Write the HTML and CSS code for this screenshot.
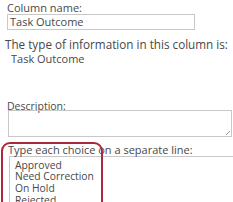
FILE: index.html
```html
<!DOCTYPE html>
<html>
<head>
<link rel="stylesheet" href="styles.css">
</head>
<body>
<div class="form">
  <div class="label">Column name:</div>
  <div class="input">Task Outcome</div>

  <div class="info">The type of information in this column is:</div>
  <div class="value">Task Outcome</div>

  <div class="label desc">Description:</div>
  <div class="textarea"><span class="grip"></span></div>

  <div class="label choice">Type each choice on a separate line:</div>
  <div class="choices">
    <div>Approved</div>
    <div>Need Correction</div>
    <div>On Hold</div>
    <div>Rejected</div>
  </div>
</div>
<!-- red highlight drawn over the choice box -->
<div class="mark"></div>
</body>
</html>
```

FILE: styles.css
```css
body {
  margin: 0;
  background: #fff;
  color: #484848;
  font-family: 'Open Sans', Arial, sans-serif;
  font-size: 11px;
  overflow: hidden;
}

.form {
  padding-top: 2px;
}

.label {
  line-height: 12px;
  padding-left: 7px;
  white-space: nowrap;
}

.input {
  margin: 0 0 0 7px;
  width: 184px;
  height: 14px;
  border: 1px solid #c8c8c8;
  padding-left: 2px;
  line-height: 14px;
}

.info {
  margin-top: 7px;
  padding-left: 5px;
  font-size: 11.7px;
  line-height: 14px;
  white-space: nowrap;
}

.value {
  margin-top: 1px;
  padding-left: 11px;
  line-height: 14px;
}

.desc {
  margin-top: 34px;
  font-size: 10.5px;
}

.textarea {
  position: relative;
  margin: -2px 0 0 8px;
  width: 222px;
  height: 25px;
  border: 1px solid #c8c8c8;
}

.grip {
  position: absolute;
  right: 1px;
  bottom: 1px;
  width: 4px;
  height: 4px;
  background: linear-gradient(135deg, transparent 45%, #999 45%, #999 60%, transparent 60%);
}

.choice {
  margin-top: 7px;
  padding-left: 8px;
}

.choices {
  margin-left: 9px;
  border-top: 1px solid #c8c8c8;
  border-left: 1px solid #c8c8c8;
  padding: 2.5px 0 0 5px;
  height: 60px;
  font-size: 10.3px;
  line-height: 11.7px;
}

.mark {
  position: absolute;
  left: 1px;
  top: 142px;
  width: 98px;
  height: 80px;
  border: 2px solid #ae263b;
  border-radius: 9px;
}
```
